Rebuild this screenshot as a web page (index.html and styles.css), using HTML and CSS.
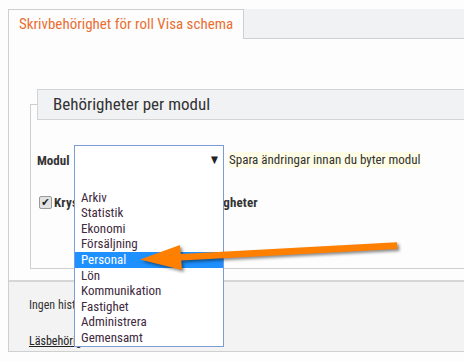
FILE: index.html
```html
<!DOCTYPE html>
<html>
<head>
    <title>Skrivbehörighet</title>
    <link rel="stylesheet" href="styles.css">
</head>
<body>
    <div class="page">
        <div class="tabs">
            <div class="tab">Skrivbehörighet för roll Visa schema</div>
            <div class="tab-rest"></div>
        </div>

        <div class="panel">
            <div class="panel-body">
                <fieldset class="group">
                    <legend>Behörigheter per modul</legend>

                    <div class="module-row">
                        <span class="label">Modul</span>
                        <div class="select">
                            <span class="caret">&#9660;</span>
                            <ul class="options">
                                <li>&nbsp;</li>
                                <li>Arkiv</li>
                                <li>Statistik</li>
                                <li>Ekonomi</li>
                                <li>Försäljning</li>
                                <li class="active">Personal</li>
                                <li>Lön</li>
                                <li>Kommunikation</li>
                                <li>Fastighet</li>
                                <li>Administrera</li>
                                <li>Gemensamt</li>
                            </ul>
                        </div>
                        <span class="hint">Spara ändringar innan du byter modul</span>
                    </div>

                    <div class="check-row">
                        <span class="checkbox">&#10004;</span>
                        <span class="check-label">Kryssa i för att sätta alla behörigheter</span>
                    </div>
                </fieldset>
            </div>

            <div class="panel-footer">
                <p class="history">Ingen historik</p>
                <a class="link" href="#">Läsbehörighet för roll Visa schema</a>
            </div>
        </div>
    </div>

    <!-- annotation arrow drawn on top of the screenshot -->
    <svg class="arrow" width="464" height="362" viewBox="0 0 464 362">
        <polygon points="176,254.2 397,242.3 397.5,248.9 176,260.8" fill="#ff7f00"/>
        <polygon points="140,259.5 180,245 182,270" fill="#ff7f00"/>
    </svg>
</body>
</html>
```

FILE: styles.css
```css
html, body {
    margin: 0;
    overflow: hidden;
    background: #fdfdfd;
}
body {
    font-family: "Roboto Condensed", "DejaVu Sans Condensed", sans-serif;
    color: #333;
    width: 464px;
    height: 362px;
    position: relative;
}
.page {
    padding: 9px 0 0 8px;
    width: 700px;
}
.tabs {
    display: flex;
    height: 30px;
}
.tab {
    background: #fdfdfd;
    border: 1px solid #cfcfcf;
    border-bottom: none;
    padding: 0 10px;
    line-height: 29px;
    font-size: 15px;
    color: #ea6f32;
}
.tab-rest {
    flex: 1;
    background: #f1f2f3;
    border-bottom: 1px solid #cfcfcf;
}
.panel {
    border-left: 1px solid #cfcfcf;
    border-bottom: 1px solid #d0d0d0;
}
.panel-body {
    padding: 50px 0 11px 21px;
}
.group {
    margin: 0;
    padding: 0 0 58px 6px;
    border: 1px solid #cfcfcf;
}
.group legend {
    box-sizing: border-box;
    width: 640px;
    height: 31px;
    padding: 0 0 0 15px;
    line-height: 29px;
    font-size: 17px;
    background: #f1f2f3;
    border: 1px solid #d4d4d4;
}
.module-row {
    display: flex;
    align-items: center;
    margin-top: 25px;
    font-size: 13px;
}
.label {
    width: 37px;
    font-weight: bold;
}
.select {
    position: relative;
    box-sizing: border-box;
    width: 150px;
    height: 30px;
    border: 1px solid #7d9bd4;
    background: #fff;
}
.caret {
    position: absolute;
    right: 5px;
    top: 8px;
    font-size: 10px;
    color: #222;
}
.options {
    position: absolute;
    z-index: 2;
    top: 100%;
    left: -1px;
    width: 150px;
    box-sizing: border-box;
    margin: 0;
    padding: 0;
    list-style: none;
    background: #fff;
    border: 1px solid #7d9bd4;
    border-top: none;
}
.options li {
    height: 15.6px;
    line-height: 15.6px;
    padding-left: 6px;
    color: #402a40;
}
.options li.active {
    background: #1e90ff;
    color: #fff;
}
.hint {
    margin-left: 5px;
    background: #fffde6;
    line-height: 16px;
}
.check-row {
    display: flex;
    align-items: center;
    margin-top: 20px;
    font-size: 13px;
    font-weight: bold;
}
.check-label {
    letter-spacing: 0.16px;
}
.checkbox {
    box-sizing: border-box;
    width: 13px;
    height: 13px;
    margin: 0 2px 0 2px;
    border: 1px solid #999;
    border-radius: 2px;
    background: #e2e2e2;
    font-size: 11px;
    line-height: 11px;
    text-align: center;
    color: #222;
}
.panel-footer {
    height: 69px;
    padding-left: 20px;
    background: #f3f3f4;
    border-top: 2px solid #d6d6d6;
    font-size: 12px;
}
.history {
    margin: 0;
    padding-top: 15px;
    line-height: 16px;
}
.link {
    display: inline-block;
    margin-top: 21px;
    color: #222;
}
.arrow {
    position: absolute;
    top: 0;
    left: 0;
    z-index: 5;
    pointer-events: none;
    filter: drop-shadow(2px 2px 1.5px rgba(0, 0, 0, 0.45));
}
```
